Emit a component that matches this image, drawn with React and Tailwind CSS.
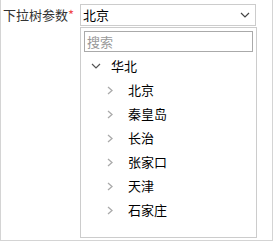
import React from 'react';

const cities = ['北京', '秦皇岛', '长治', '张家口', '天津', '石家庄'];

const ChevronDown = ({ className }) => (
  <svg width="10" height="6" viewBox="0 0 10 6" className={className}>
    <path d="M1 1 L5 5 L9 1" fill="none" stroke="currentColor" strokeWidth="1.2" />
  </svg>
);

const ChevronRight = () => (
  <svg width="6" height="9" viewBox="0 0 6 9" className="text-[#aaa]">
    <path d="M1 1 L5 4.5 L1 8" fill="none" stroke="currentColor" strokeWidth="1.3" />
  </svg>
);

const App = () => {
  return (
    <div
      className="w-[273px] h-[241px] bg-white border-l border-r border-b border-[#d4d4d4] text-[13px] text-[#333]"
      style={{ fontFamily: '"Noto Sans CJK SC", "Noto Sans", sans-serif' }}
    >
      <div className="flex pt-[4px]">
        <label className="w-[79px] pl-[2px] leading-[22px] whitespace-nowrap">
          下拉树参数<span className="text-[#f04848]">*</span>
        </label>
        <div className="flex flex-col">
          <div className="w-[176px] h-[22px] border border-[#ccc] flex items-center justify-between pl-[2px] pr-[5px] text-black">
            <span>北京</span>
            <ChevronDown className="text-[#444]" />
          </div>
          <div className="mt-[1px] w-[177px] h-[211px] border border-[#ccc] px-[3px] pt-[3px]">
            <div className="h-[21px] w-[169px] border border-[#aaa] flex items-center pl-[2px] text-[#999]">
              搜索
            </div>
            <div className="mt-[2px]">
              <div className="h-[24px] flex items-center pl-[7px]">
                <ChevronDown className="text-[#555]" />
                <span className="ml-[10px] text-black">华北</span>
              </div>
              {cities.map((c) => (
                <div key={c} className="h-[24px] flex items-center pl-[23px]">
                  <ChevronRight />
                  <span className="ml-[15px] text-black">{c}</span>
                </div>
              ))}
            </div>
          </div>
        </div>
      </div>
    </div>
  );
};

export default App;
